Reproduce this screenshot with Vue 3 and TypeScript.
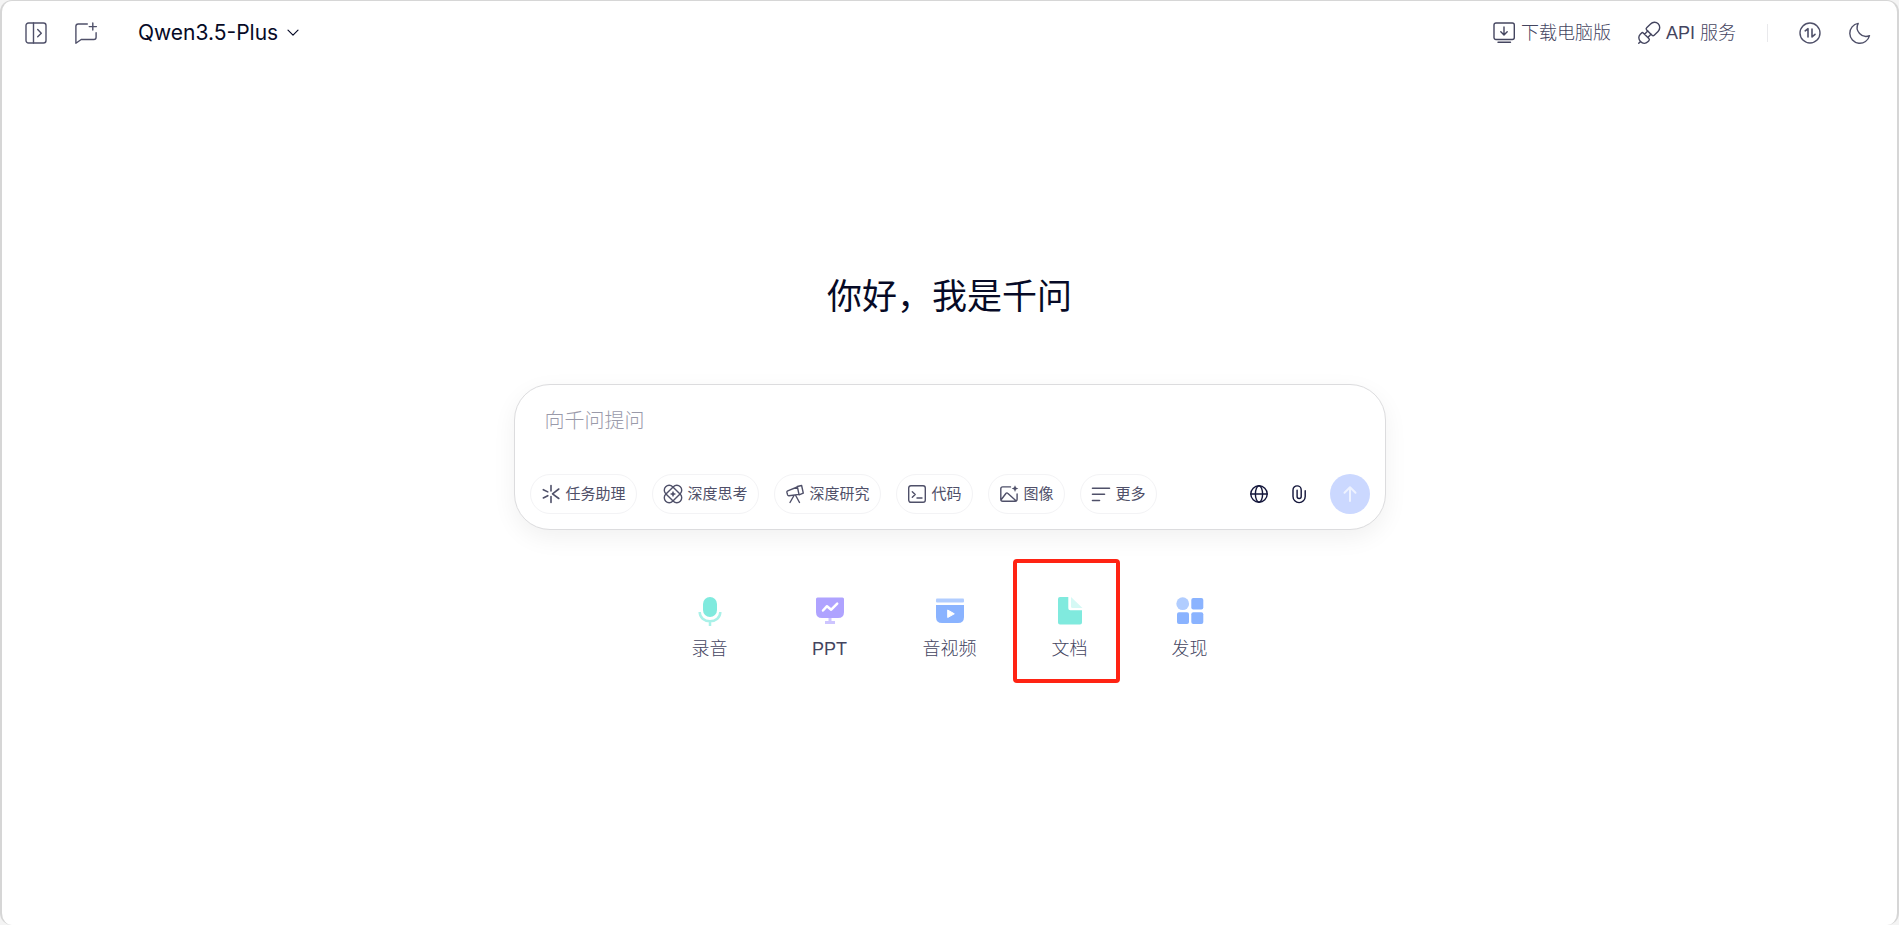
<script setup lang="ts">
import { ref } from 'vue'

type ToolIcon = 'task' | 'think' | 'research' | 'code' | 'image' | 'more'
type ShortcutIcon = 'mic' | 'ppt' | 'video' | 'doc' | 'discover'

const tools: { icon: ToolIcon; label: string }[] = [
  { icon: 'task', label: '任务助理' },
  { icon: 'think', label: '深度思考' },
  { icon: 'research', label: '深度研究' },
  { icon: 'code', label: '代码' },
  { icon: 'image', label: '图像' },
  { icon: 'more', label: '更多' },
]

const shortcuts: { icon: ShortcutIcon; label: string; marked?: boolean }[] = [
  { icon: 'mic', label: '录音' },
  { icon: 'ppt', label: 'PPT' },
  { icon: 'video', label: '音视频' },
  { icon: 'doc', label: '文档', marked: true },
  { icon: 'discover', label: '发现' },
]

const question = ref('')
</script>

<template>
  <div class="shell">
    <header class="bar">
      <div class="group">
        <button class="icon-btn" type="button" aria-label="展开侧边栏">
          <svg class="i22" viewBox="0 0 22 22">
            <rect x="1" y="1" width="20" height="20" rx="2.5" />
            <path d="M8.5 1v20M12.7 7.6l3.6 3.6-3.6 3.6" />
          </svg>
        </button>
        <button class="icon-btn chat" type="button" aria-label="新建对话">
          <svg class="i22" viewBox="0 0 22 22">
            <path d="M12.3 2H3.2C1.9 2 .9 2.900 .9 4.200V21.200l5.300-3.700h12.600c1.300 0 2.300-1 2.300-2.300V10.800M17.800 1v7M14.200 4.600h7.200" />
          </svg>
        </button>
        <button class="model" type="button">
          Qwen3.5-Plus
          <svg class="caret" viewBox="0 0 12 8"><path d="M1 1.200l5 5 5-5" /></svg>
        </button>
      </div>
      <div class="group right">
        <a class="link" href="#">
          <svg class="i22" viewBox="0 0 22 22">
            <rect x="1" y="1" width="20.300" height="16.500" rx="2" />
            <path d="M11 5v7.600M7.800 9.700l3.200 3.200 3.200-3.200M5 20.300h12.500" />
          </svg>
          <span>下载电脑版</span>
        </a>
        <a class="link api" href="#">
          <svg class="i22" viewBox="0 0 22 22">
            <g transform="rotate(-45 11 11)">
              <path d="M5.500 5.700H4C1 5.700-1 8-1 11s2 5.300 5 5.300h1.500q1.500 0 1.500-1.500V7.200q0-1.500-1.500-1.500zM-1 11h-2.500M7 8.700h4.500M7 13.300h4.500" />
              <path d="M13 5.700h5.500c3 0 5.500 2.300 5.500 5.300s-2.500 5.300-5.500 5.300H13q-1.500 0-1.500-1.500V7.200q0-1.500 1.500-1.500z" />
            </g>
          </svg>
          <span>API 服务</span>
        </a>
        <span class="divider"></span>
        <button class="icon-btn" type="button" aria-label="切换">
          <svg class="i22" viewBox="0 0 22 22">
            <circle cx="11" cy="11" r="10" />
            <path class="bold" d="M6.200 8.800l2.800-2.100V15M13 7v8l3-2.700" />
          </svg>
        </button>
        <button class="icon-btn moon" type="button" aria-label="深色模式">
          <svg class="i22" viewBox="0 0 22 22">
            <path d="M9.200 1.400A10 10 0 1 0 20.500 13.700 8.900 8.900 0 0 1 9.200 1.400z" />
          </svg>
        </button>
      </div>
    </header>

    <main class="main">
      <h1 class="title">你好，我是千问</h1>

      <form class="card" @submit.prevent>
        <textarea v-model="question" class="ask" rows="1" placeholder="向千问提问" aria-label="向千问提问"></textarea>
        <div class="tools">
          <button v-for="t in tools" :key="t.icon" class="pill" type="button">
            <svg class="i18" viewBox="0 0 18 18">
              <path v-if="t.icon === 'task'" class="bold" d="M9 .5v5.500M9 17.500v-6M1.300 4.700l4.500 2.200M1.300 13l4.500-2.300M16.800 4l-6.300 4.800 6.300 4.700" />
              <g v-else-if="t.icon === 'think'">
                <rect x="4.100" y="-1.300" width="9.800" height="20.600" rx="4.900" transform="rotate(45 9 9)" />
                <rect x="4.100" y="-1.300" width="9.800" height="20.600" rx="4.900" transform="rotate(-45 9 9)" />
                <path class="solid" d="M9 5.800l1 2.200 2.200 1-2.200 1-1 2.200L8 10 5.800 9 8 8z" />
              </g>
              <g v-else-if="t.icon === 'research'">
                <path d="M11.300 1.500l4.300-1 1.700 7.600-4.200 1.700zM11.300 2L1.700 5.800c-.7.300-.9.800-.8 1.400l.7 2.700c.2.700.7 1 1.400.9l10-1.400M7.700 11L4 17.500M9.700 10.500l3.800 7" />
              </g>
              <g v-else-if="t.icon === 'code'">
                <rect x=".7" y=".7" width="16.600" height="16.600" rx="2.200" />
                <path d="M4.300 6.800L7.200 9.500l-2.900 2.700M9 13h5" />
              </g>
              <g v-else-if="t.icon === 'image'">
                <path d="M10.500 1.900H2.700C1.600 1.900.8 2.700.8 3.800v10.500c0 1.100.8 1.900 1.900 1.900h12.500c1.100 0 1.900-.8 1.900-1.900V9M1.300 14.500l4.800-6.200c.5-.6 1.100-.6 1.600-.1l8 7.400" />
                <path class="solid" d="M15 .3l1 2.300 2.300 1-2.300 1-1 2.300-1-2.300-2.300-1 2.300-1z" />
              </g>
              <path v-else class="bold" d="M.5 3.200h17M.5 9.300h12M.5 15.500h7" />
            </svg>
            <span>{{ t.label }}</span>
          </button>
          <div class="actions">
            <button class="icon-btn dark" type="button" aria-label="联网搜索">
              <svg class="i18" viewBox="0 0 18 18">
                <circle cx="9" cy="9" r="8.200" />
                <ellipse cx="9" cy="9" rx="3.600" ry="8.200" />
                <path d="M.8 9h16.400" />
              </svg>
            </button>
            <button class="icon-btn dark" type="button" aria-label="上传附件">
              <svg class="i18" viewBox="0 0 18 18">
                <path d="M15.200 5.800v5.700a5.700 5.700 0 0 1-12.200 0V5a4.100 4.100 0 0 1 8.200 0v6.500a2 2 0 0 1-4.100 0V5.300" />
              </svg>
            </button>
            <button class="send" type="submit" aria-label="发送">
              <svg class="i18" viewBox="0 0 18 18"><path d="M9 16V2.500M3.500 7.800L9 2.300l5.500 5.500" /></svg>
            </button>
          </div>
        </div>
      </form>

      <nav class="shortcuts">
        <a v-for="s in shortcuts" :key="s.icon" class="shortcut" href="#">
          <svg class="i36" viewBox="0 0 36 36">
            <g v-if="s.icon === 'mic'">
              <rect x="11" y="4" width="14" height="20" rx="7" fill="#80eade" />
              <path d="M7.700 19c0 5.600 4.500 9.200 10.300 9.200S28.300 24.600 28.300 19M18 28v5" fill="none" stroke="#a9f1e8" stroke-width="2.500" />
            </g>
            <g v-else-if="s.icon === 'ppt'">
              <path d="M4 6q0-1.500 1.500-1.500h25q1.500 0 1.500 1.500v13q0 6-6 6H10q-6 0-6-6z" fill="#afa3ff" />
              <path d="M18 25v4M13 29.500h10" fill="none" stroke="#cdc5ff" stroke-width="3" />
              <path d="M11 17.500l4-4.300 4.200 3.500 6-6" fill="none" stroke="#fff" stroke-width="2.500" stroke-linecap="round" stroke-linejoin="round" />
            </g>
            <g v-else-if="s.icon === 'video'">
              <rect x="4" y="5.500" width="28" height="4" rx="1" fill="#b1cdff" />
              <path d="M4 12h28v12q0 6-6 6H10q-6 0-6-6z" fill="#8ab3ff" />
              <path d="M15.700 17v7.500l6.600-3.700z" fill="#fff" stroke="#fff" stroke-linejoin="round" />
            </g>
            <g v-else-if="s.icon === 'doc'">
              <path d="M8 4h8.300v11.200q0 2 2 2H30v12.300q0 2-2 2H8q-2 0-2-2V6q0-2 2-2z" fill="#80eade" />
              <path d="M19 4l11.500 11H20.500q-1.500 0-1.500-1.500z" fill="#d5f9f5" />
            </g>
            <g v-else>
              <circle cx="10.700" cy="10.700" r="6.400" fill="#b1cdff" />
              <rect x="19.300" y="5" width="12" height="11.500" rx="2" fill="#8ab3ff" />
              <rect x="5" y="19.300" width="12" height="11.700" rx="2" fill="#8ab3ff" />
              <rect x="19.300" y="19.300" width="12" height="11.700" rx="2" fill="#8ab3ff" />
            </g>
          </svg>
          <span>{{ s.label }}</span>
          <i v-if="s.marked" class="mark"></i>
        </a>
      </nav>
    </main>
  </div>
</template>

<style>
html,
body {
  background: #f4f4f4;
}
</style>

<style scoped>
.shell {
  box-sizing: border-box;
  min-height: 100vh;
  border: 2px solid #d6d6d6;
  border-top-width: 1px;
  border-bottom-width: 0;
  border-radius: 12px;
  background: #fff;
  color: #4f5069;
  font-family: "Liberation Sans", "Noto Sans CJK SC", sans-serif;
}
button {
  border: 0;
  padding: 0;
  background: none;
  color: inherit;
  font: inherit;
  cursor: pointer;
}
a {
  color: inherit;
  text-decoration: none;
}
svg {
  display: block;
  flex: none;
  overflow: visible;
}
.i18 { width: 18px; height: 18px; }
.i22 { width: 22px; height: 22px; }
.i36 { width: 36px; height: 36px; }
.i18,
.i22,
.caret {
  fill: none;
  stroke: currentColor;
  stroke-width: 1.4;
  stroke-linecap: round;
  stroke-linejoin: round;
}
.bold { stroke-width: 1.6; }
.solid { fill: currentColor; stroke: none; }
.bar {
  display: flex;
  justify-content: space-between;
  height: 64px;
  padding: 0 26px 0 23px;
}
.group {
  display: flex;
  align-items: center;
}
.chat { margin-left: 28px; }
.model {
  display: flex;
  align-items: center;
  gap: 9px;
  margin-left: 41px;
  color: #060a26;
  font-family: Inter, sans-serif;
  font-size: 21px;
  line-height: 28px;
}
.caret {
  width: 12px;
  height: 8px;
  stroke-width: 1.2;
}
.link {
  display: flex;
  align-items: center;
  gap: 6px;
  color: #44455f;
  font-size: 18px;
  font-weight: 300;
  line-height: 28px;
}
.api { margin-left: 27px; }
.divider {
  width: 1px;
  height: 18px;
  margin: 0 31px;
  background: #e9e9ec;
}
.moon { margin-left: 28px; }
.main {
  display: flex;
  flex-direction: column;
  align-items: center;
  padding: 208px 24px 0;
}
.title {
  margin: 0;
  color: #060a26;
  font-size: 35px;
  font-weight: 400;
  line-height: 48px;
}
.card {
  box-sizing: border-box;
  width: 100%;
  max-width: 872px;
  margin-top: 63px;
  padding: 20px 15px 15px;
  border: 1px solid #dcdcde;
  border-radius: 36px;
  background: #fff;
  box-shadow: 0 8px 24px rgba(0, 0, 0, 0.06);
}
.ask {
  display: block;
  box-sizing: border-box;
  width: 100%;
  height: 32px;
  margin: 0 0 37px;
  padding: 0 15px;
  border: 0;
  outline: 0;
  resize: none;
  overflow: hidden;
  background: none;
  color: #060a26;
  font-family: inherit;
  font-size: 20px;
  font-weight: 300;
  line-height: 32px;
}
.ask::placeholder {
  color: #9a9aaa;
  opacity: 1;
}
.tools {
  display: flex;
  align-items: center;
  gap: 15px;
}
.pill {
  display: flex;
  align-items: center;
  gap: 6px;
  height: 40px;
  padding: 0 10px 0 11px;
  border: 1px solid #f3f3f5;
  border-radius: 20px;
  font-size: 15px;
  line-height: 24px;
  white-space: nowrap;
}
.actions {
  display: flex;
  align-items: center;
  gap: 22px;
  margin-left: auto;
}
.dark { color: #12153a; }
.send {
  display: flex;
  align-items: center;
  justify-content: center;
  width: 40px;
  height: 40px;
  border-radius: 50%;
  background: #cbd8ff;
  color: #eef2ff;
}
.send .i18 { stroke-width: 2; }
.shortcuts {
  display: flex;
  margin-top: 29px;
}
.shortcut {
  position: relative;
  display: flex;
  flex-direction: column;
  align-items: center;
  gap: 6px;
  box-sizing: border-box;
  width: 120px;
  height: 124px;
  padding-top: 34px;
  color: #44455f;
  font-size: 18px;
  font-weight: 300;
  line-height: 28px;
}
.mark {
  position: absolute;
  inset: 0 10px 0 3px;
  border: 4px solid #ff2313;
  border-radius: 4px;
}
</style>
